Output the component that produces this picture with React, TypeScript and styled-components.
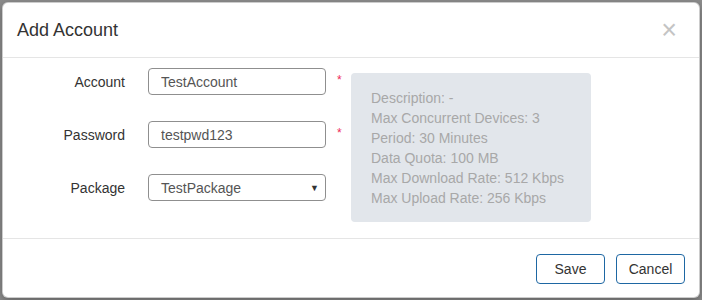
import React from "react";
import styled, { createGlobalStyle } from "styled-components";

const GlobalStyle = createGlobalStyle`
  html, body {
    margin: 0;
    padding: 0;
    background: #8c8c8c;
    font-family: "Liberation Sans", Arial, sans-serif;
  }
  * {
    box-sizing: border-box;
  }
`;

const infoLines = [
  "Description: -",
  "Max Concurrent Devices: 3",
  "Period: 30 Minutes",
  "Data Quota: 100 MB",
  "Max Download Rate: 512 Kbps",
  "Max Upload Rate: 256 Kbps",
];

export default function App() {
  return (
    <>
      <GlobalStyle />
      <Backdrop>
        <Modal>
          <Header>
            <Title>Add Account</Title>
            <CloseButton aria-label="Close">×</CloseButton>
          </Header>
          <Body>
            <Form>
              <FormRow>
                <Label>Account</Label>
                <TextInput defaultValue="TestAccount" />
                <Required>*</Required>
              </FormRow>
              <FormRow>
                <Label>Password</Label>
                <TextInput defaultValue="testpwd123" />
                <Required>*</Required>
              </FormRow>
              <FormRow>
                <Label>Package</Label>
                <SelectBox>
                  <span>TestPackage</span>
                  <Caret>▼</Caret>
                </SelectBox>
                <span />
              </FormRow>
            </Form>
            <InfoBox>
              {infoLines.map((line) => (
                <InfoLine key={line}>{line}</InfoLine>
              ))}
            </InfoBox>
          </Body>
          <Footer>
            <Button>Save</Button>
            <Button>Cancel</Button>
          </Footer>
        </Modal>
      </Backdrop>
    </>
  );
}

const Backdrop = styled.div`
  width: 702px;
  height: 300px;
  padding: 2px;
`;

const Modal = styled.div`
  width: 698px;
  height: 296px;
  background: #fff;
  border: 1px solid rgba(0, 0, 0, 0.2);
  border-radius: 6px;
  box-shadow: 0 3px 9px rgba(0, 0, 0, 0.3);
  display: flex;
  flex-direction: column;
`;

const Header = styled.div`
  height: 55px;
  padding: 0 15px 0 14px;
  border-bottom: 1px solid #e5e5e5;
  display: flex;
  align-items: center;
  justify-content: space-between;
`;

const Title = styled.h4`
  margin: 0;
  font-size: 18px;
  font-weight: 400;
  color: #333;
`;

const CloseButton = styled.span`
  font-size: 27px;
  font-weight: 400;
  color: #c4c4c4;
  margin-right: 7px;
  line-height: 1;
  cursor: pointer;
`;

const Body = styled.div`
  height: 181px;
  padding: 10px 15px;
  border-bottom: 1px solid #e5e5e5;
  display: flex;
  align-items: flex-start;
`;

const Form = styled.div`
  display: flex;
  flex-direction: column;
  gap: 26px;
`;

const FormRow = styled.div`
  display: grid;
  grid-template-columns: 107px 23px 178px 25px;
  align-items: center;
  & > :nth-child(2) {
    grid-column: 3;
  }
`;

const Label = styled.label`
  grid-column: 1;
  text-align: right;
  font-size: 14px;
  color: #333;
`;

const TextInput = styled.input`
  height: 27px;
  width: 178px;
  padding: 0 12px;
  border: 1px solid #8f8f8f;
  border-radius: 4px;
  font-family: "Liberation Sans", Arial, sans-serif;
  font-size: 14px;
  color: #555;
  outline: none;
`;

const Required = styled.span`
  padding-left: 11px;
  color: #ee2a5a;
  font-size: 12px;
  align-self: start;
  margin-top: 5px;
`;

const SelectBox = styled.div`
  height: 27px;
  width: 178px;
  padding: 0 6px 0 12px;
  border: 1px solid #8f8f8f;
  border-radius: 4px;
  display: flex;
  align-items: center;
  justify-content: space-between;
  font-size: 14px;
  color: #555;
`;

const Caret = styled.span`
  font-size: 9px;
  color: #333;
`;

const InfoBox = styled.div`
  margin-top: 5px;
  width: 240px;
  height: 149px;
  padding: 15px 20px;
  background: #e2e6eb;
  border-radius: 4px;
`;

const InfoLine = styled.div`
  font-size: 14px;
  line-height: 20px;
  color: #a8a8a8;
`;

const Footer = styled.div`
  flex: 1;
  padding: 15px 14px 0 0;
  display: flex;
  justify-content: flex-end;
  align-items: flex-start;
  gap: 11px;
`;

const Button = styled.button`
  width: 69px;
  height: 30px;
  background: #fff;
  border: 1px solid #1e67a3;
  border-radius: 4px;
  font-family: "Liberation Sans", Arial, sans-serif;
  font-size: 14px;
  color: #333;
  cursor: pointer;
`;
